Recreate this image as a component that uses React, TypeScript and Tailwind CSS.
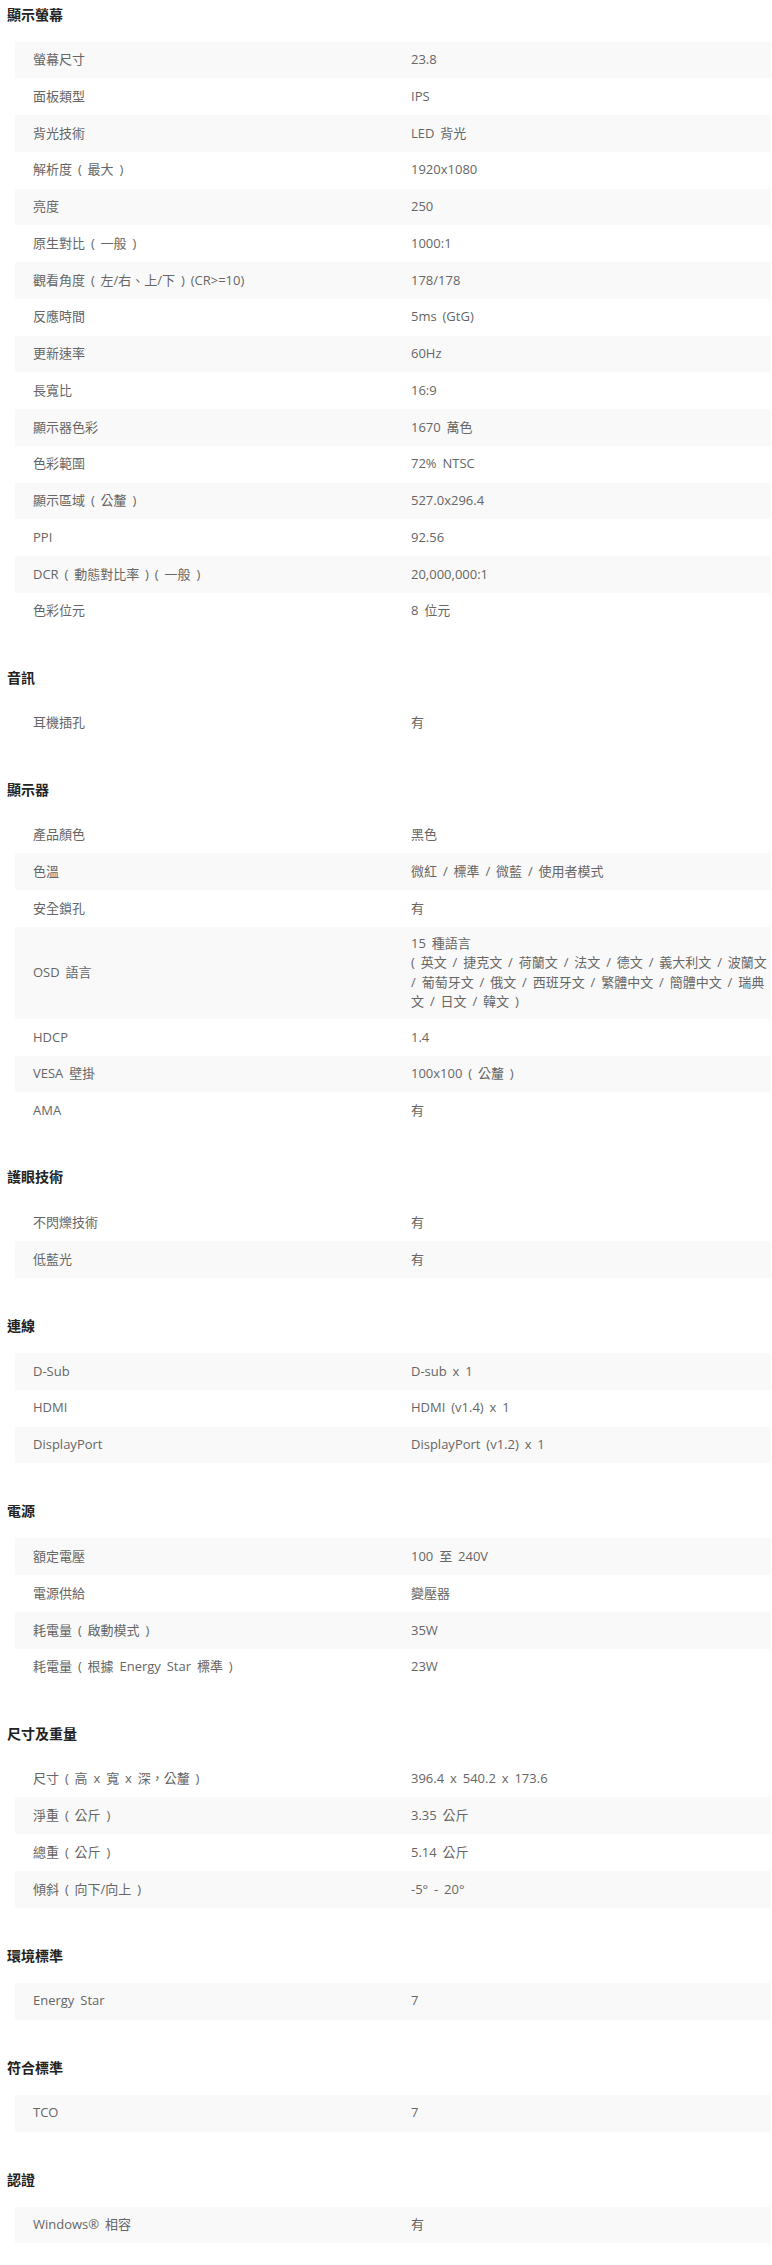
import React from 'react';

type Row = { label: string; value: React.ReactNode; shaded?: boolean };
type Section = { title: string; rows: Row[] };

const osdLanguages = (
  <>
    15 種語言
    <br />( 英文 / 捷克文 / 荷蘭文 / 法文 / 德文 / 義大利文 / 波蘭文
    <br />/ 葡萄牙文 / 俄文 / 西班牙文 / 繁體中文 / 簡體中文 / 瑞典
    <br />文 / 日文 / 韓文 )
  </>
);

const sections: Section[] = [
  {
    title: '顯示螢幕',
    rows: [
      { label: '螢幕尺寸', value: '23.8', shaded: true },
      { label: '面板類型', value: 'IPS' },
      { label: '背光技術', value: 'LED 背光', shaded: true },
      { label: '解析度 ( 最大 )', value: '1920x1080' },
      { label: '亮度', value: '250', shaded: true },
      { label: '原生對比 ( 一般 )', value: '1000:1' },
      { label: '觀看角度 ( 左/右、上/下 ) (CR>=10)', value: '178/178', shaded: true },
      { label: '反應時間', value: '5ms (GtG)' },
      { label: '更新速率', value: '60Hz', shaded: true },
      { label: '長寬比', value: '16:9' },
      { label: '顯示器色彩', value: '1670 萬色', shaded: true },
      { label: '色彩範圍', value: '72% NTSC' },
      { label: '顯示區域 ( 公釐 )', value: '527.0x296.4', shaded: true },
      { label: 'PPI', value: '92.56' },
      { label: 'DCR ( 動態對比率 ) ( 一般 )', value: '20,000,000:1', shaded: true },
      { label: '色彩位元', value: '8 位元' },
    ],
  },
  {
    title: '音訊',
    rows: [{ label: '耳機插孔', value: '有' }],
  },
  {
    title: '顯示器',
    rows: [
      { label: '產品顏色', value: '黑色' },
      { label: '色溫', value: '微紅 / 標準 / 微藍 / 使用者模式', shaded: true },
      { label: '安全鎖孔', value: '有' },
      { label: 'OSD 語言', value: osdLanguages, shaded: true },
      { label: 'HDCP', value: '1.4' },
      { label: 'VESA 壁掛', value: '100x100 ( 公釐 )', shaded: true },
      { label: 'AMA', value: '有' },
    ],
  },
  {
    title: '護眼技術',
    rows: [
      { label: '不閃爍技術', value: '有' },
      { label: '低藍光', value: '有', shaded: true },
    ],
  },
  {
    title: '連線',
    rows: [
      { label: 'D-Sub', value: 'D-sub x 1', shaded: true },
      { label: 'HDMI', value: 'HDMI (v1.4) x 1' },
      { label: 'DisplayPort', value: 'DisplayPort (v1.2) x 1', shaded: true },
    ],
  },
  {
    title: '電源',
    rows: [
      { label: '額定電壓', value: '100 至 240V', shaded: true },
      { label: '電源供給', value: '變壓器' },
      { label: '耗電量 ( 啟動模式 )', value: '35W', shaded: true },
      { label: '耗電量 ( 根據 Energy Star 標準 )', value: '23W' },
    ],
  },
  {
    title: '尺寸及重量',
    rows: [
      { label: '尺寸 ( 高 x 寬 x 深，公釐 )', value: '396.4 x 540.2 x 173.6' },
      { label: '淨重 ( 公斤 )', value: '3.35 公斤', shaded: true },
      { label: '總重 ( 公斤 )', value: '5.14 公斤' },
      { label: '傾斜 ( 向下/向上 )', value: '-5° - 20°', shaded: true },
    ],
  },
  {
    title: '環境標準',
    rows: [{ label: 'Energy Star', value: '7', shaded: true }],
  },
  {
    title: '符合標準',
    rows: [{ label: 'TCO', value: '7', shaded: true }],
  },
  {
    title: '認證',
    rows: [{ label: 'Windows® 相容', value: '有', shaded: true }],
  },
];

function SpecRow({ row }: { row: Row }) {
  return (
    <div
      className={`grid grid-cols-2 items-center min-h-[36.75px] text-[13px] leading-[19.5px] text-[#666] [word-spacing:2.5px] ${row.shaded ? 'bg-[#f9f9f9]' : 'bg-white'}`}
    >
      <div className="pl-[18px] pr-2 py-[7px]">{row.label}</div>
      <div className="pl-[18px] pr-[2px] py-[7px] whitespace-nowrap">{row.value}</div>
    </div>
  );
}

export default function App() {
  return (
    <div className="w-[772px] bg-white pb-[21px] font-['Open_Sans','Noto_Sans_CJK_TC',sans-serif]">
      {sections.map((section, i) => (
        <section key={section.title} className={i === 0 ? '' : 'mt-[33.7px]'}>
          <h3 className="h-[28px] flex items-center pl-[7px] text-[14px] font-bold text-[#222]">
            {section.title}
          </h3>
          <div className="mt-[13.5px] ml-[15px] mr-[1px]">
            {section.rows.map((row) => (
              <SpecRow key={row.label} row={row} />
            ))}
          </div>
        </section>
      ))}
    </div>
  );
}
